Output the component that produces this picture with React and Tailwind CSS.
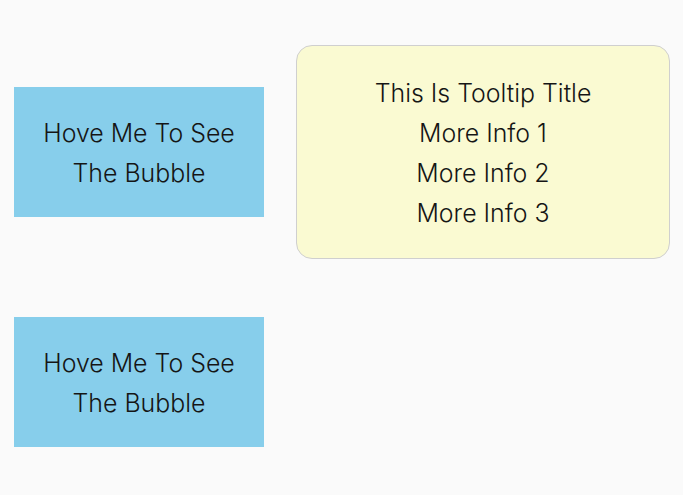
import React from 'react';

function HoverBox({ showTip }) {
  return (
    <div className="relative w-[250px] h-[130px] bg-[#87ceeb] flex flex-col items-center justify-center pt-[1px] text-[24.9px] leading-[40px] font-light text-[#151515]">
      <span>Hove Me To See</span>
      <span>The Bubble</span>
      {showTip && (
        <div className="absolute left-[282px] top-[-42px] w-[374px] h-[214px] rounded-[16px] border border-[#cfcfcf] bg-[#fafad2] flex flex-col items-center justify-center pt-[1px]">
          <span>This Is Tooltip Title</span>
          <span>More Info 1</span>
          <span>More Info 2</span>
          <span>More Info 3</span>
        </div>
      )}
    </div>
  );
}

export default function App() {
  return (
    <div className="min-h-[495px] bg-[#fafafa] pl-[14px] pt-[87px] flex flex-col gap-[100px]" style={{ fontFamily: 'Inter, "Noto Sans", sans-serif' }}>
      <HoverBox showTip />
      <HoverBox />
    </div>
  );
}
